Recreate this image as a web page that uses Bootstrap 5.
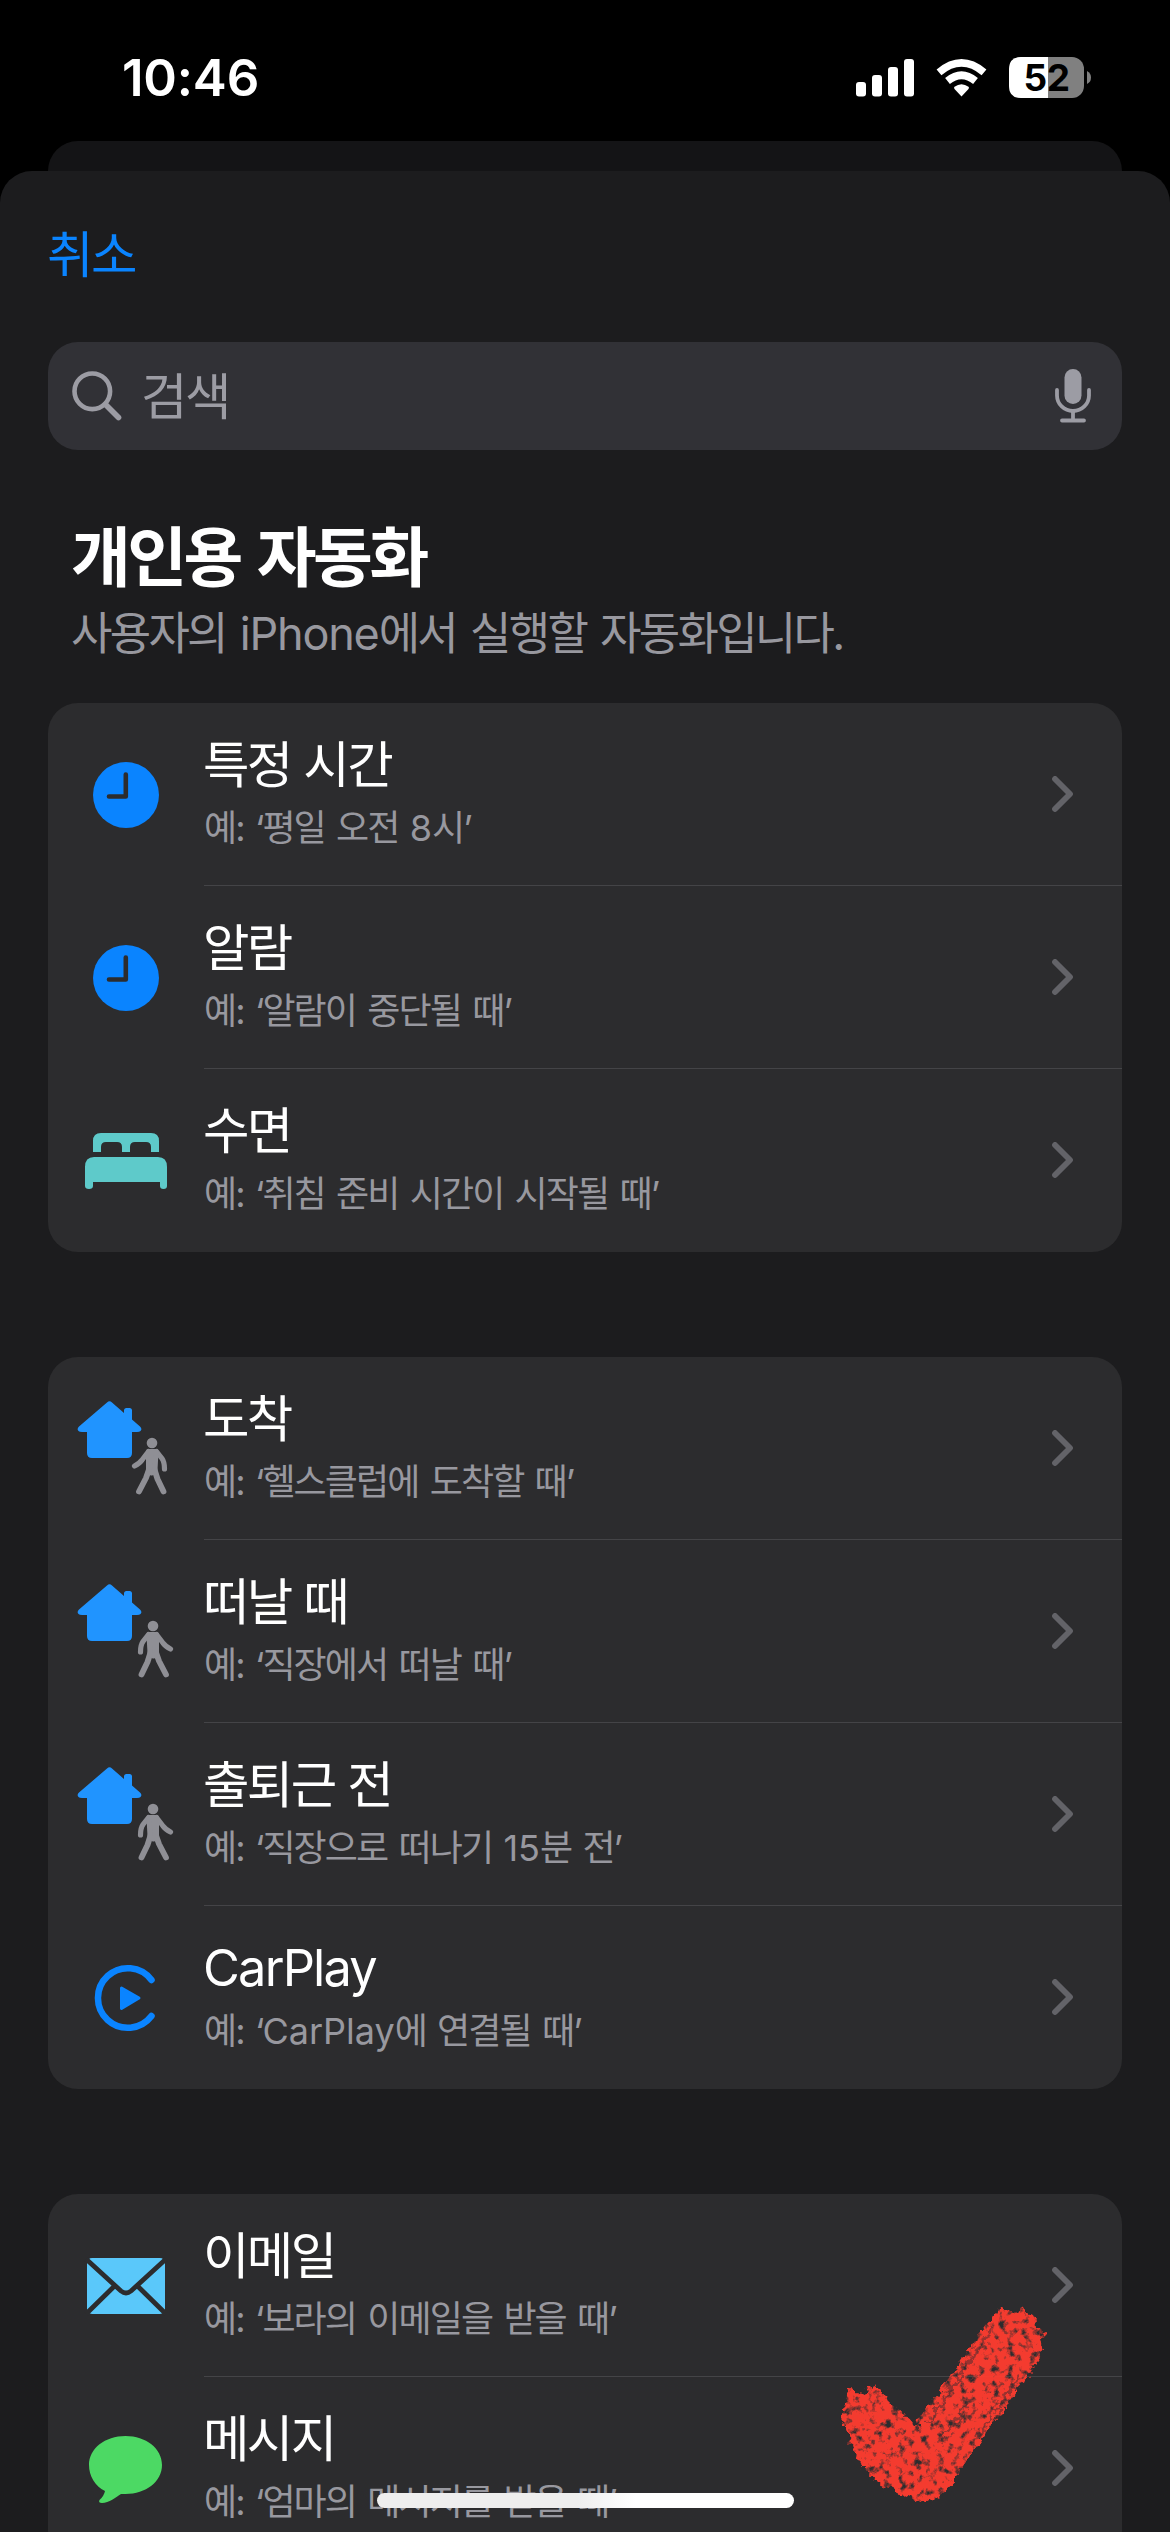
<!DOCTYPE html>
<html lang="ko" data-bs-theme="dark">
<head>
<meta charset="utf-8">
<meta name="viewport" content="width=device-width, initial-scale=1">
<title>개인용 자동화</title>
<link href="https://cdn.jsdelivr.net/npm/bootstrap@5.3.0/dist/css/bootstrap.min.css" rel="stylesheet">
<style>
  html, body { height: 2532px; overflow: hidden; }
  body { background: #000; color: #fff; font-family: Inter, "Noto Sans CJK KR", sans-serif; font-kerning: normal; }
  svg { display: block; flex: none; }
  .screen { width: 1170px; height: 2532px; overflow: hidden; }
  .status { height: 141px; padding: 47px 78px 0 122px; }
  .clock-text { font-size: 51px; font-weight: 600; line-height: 62px; letter-spacing: -.2px; }
  .status svg { margin-top: 3px; }
  .back-sheet { height: 30px; margin: 0 48px; background: #141416; border-radius: 30px 30px 0 0; }
  .sheet { height: 2361px; background: #1c1c1e; border-radius: 32px 32px 0 0; padding: 54px 48px 0; }
  .cancel { font-size: 50.500px; line-height: 60px; letter-spacing: -2.5px; margin-left: -1px; color: #0a84ff; text-decoration: none; }
  .search-box { height: 108px; margin-top: 57px; background: #313136; border-radius: 30px; padding: 0 31px 0 24px; color: #9c9ca4; }
  .search-box .hint { font-size: 50.500px; line-height: 60px; letter-spacing: -2.5px; margin: 2px 0 0 19px; }
  .heading { font-size: 65px; font-weight: 700; line-height: 80px; letter-spacing: -3.500px; word-spacing: 5px; margin: 68px 0 0 23px; }
  .subheading { font-size: 45px; line-height: 56px; letter-spacing: -2.7px; word-spacing: 4px; color: #98989f; margin: 8px 0 0 23px; }
  .subheading span { letter-spacing: -1.2px; }
  .group { background: #2c2c2e; border-radius: 30px; overflow: hidden; margin-bottom: 105px; }
  .group.first { margin-top: 41px; }
  .entry { height: 183px; }
  .entry-body { border-bottom: 1px solid #444447; padding: 32px 49px 0 0; }
  .entry:last-child .entry-body { border-bottom-color: transparent; }
  .entry-title { font-size: 50.500px; line-height: 60px; letter-spacing: -2.6px; word-spacing: 1px; margin-left: -1px; }
  .entry-title.latin { letter-spacing: -1.800px; }
  .entry-note { font-size: 36px; line-height: 46px; letter-spacing: -1.900px; word-spacing: 3px; margin-top: 10px; color: #98989f; }
  .entry-note span { letter-spacing: 0; }
  .chevron { margin-top: 41px; }
  .home-bar { left: 377px; top: 2493px; width: 417px; height: 15px; border-radius: 8px; background: linear-gradient(90deg, #eee 0 48%, #fff 62%); }
  .stroke { left: 830px; top: 2290px; }
</style>
</head>
<body>
<svg width="0" height="0" class="position-absolute">
  <defs>
    <symbol id="clock" viewBox="0 0 156 182"><circle cx="78" cy="92" r="33" fill="#0a84ff"/><path d="M61 93.500H77.800V71.500" fill="none" stroke="#2c2c2e" stroke-width="4.600" stroke-linecap="round" stroke-linejoin="round"/></symbol>
    <symbol id="bed" viewBox="0 0 156 182"><path fill="#5ecaca" d="M45 83V72q0-8 8-8H103q8 0 8 8V83H103V78q0-5-5-5H87q-5 0-5 5v5H74V78q0-5-5-5H58q-5 0-5 5v5ZM37 98q0-10 9-10H110q9 0 9 10V117q0 3-3.500 3t-3.500-3V113H45v4q0 3-4 3t-4-3Z"/></symbol>
    <symbol id="house" viewBox="0 0 156 182"><path fill="#2094ff" d="M59 45.500q2.500-2.300 5 0L76 56V53.500q0-2.500 2.500-2.500h3q2.500 0 2.500 2.500V62.500L92 69.500q2.500 2.500 .5 4.500q-1 1-3.500 1H84V96q0 5-5 5H44q-5 0-5-5V75H34q-2.500 0-3.500-1q-2-2 .5-4.500Z"/></symbol>
    <symbol id="walker" viewBox="0 0 40 60"><g fill="none" stroke="#8f8f95" stroke-linecap="round" stroke-linejoin="round"><circle cx="21" cy="6" r="5.300" fill="#8f8f95" stroke="none"/><path stroke-width="5.200" d="M17.500 14.500 11 23Q9 26 3.500 29M25.500 14.500 31 21.500Q33.500 25 33.500 32"/><path stroke-width="5.800" d="M18.500 31 15 41 8 54.500M23 31 26.500 42 32.500 54.500"/><path stroke-width="5" fill="#8f8f95" d="M17.500 14.500H25L24 33 20.500 36 17.500 33Z"/></g></symbol>
    <symbol id="carplay" viewBox="0 0 156 182"><path d="M103.500 74A29.800 29.800 0 1 0 103.500 110" fill="none" stroke="#0a84ff" stroke-width="6.500" stroke-linecap="round"/><path d="M73.500 82 91 92 73.500 102.500Z" fill="#0a84ff" stroke="#0a84ff" stroke-width="3" stroke-linejoin="round"/></symbol>
    <symbol id="mail" viewBox="0 0 156 182"><rect x="39" y="64" width="78" height="56" rx="5" fill="#5ac8fa"/><path d="M38 65 73 97Q78 101 83 97L118 65M38 120 66.500 92M118 120 89.500 92" fill="none" stroke="#2c2c2e" stroke-width="4.800"/></symbol>
    <symbol id="bubble" viewBox="0 0 156 182"><path fill="#4cd964" d="M77.500 59C98 59 114 71.500 114 88S98 117 77.500 117Q75 117 73 117C68 120 61 126 54 126Q50 126 51.500 123Q56 119 57 114C47 109 41 99 41 88C41 71.500 57 59 77.500 59Z"/></symbol>
    <symbol id="chev" viewBox="0 0 21 36"><path d="M3 3 18 18 3 33" fill="none" stroke="#636368" stroke-width="5.800" stroke-linecap="round" stroke-linejoin="round"/></symbol>
  </defs>
</svg>

<div class="screen position-relative">
  <header class="status d-flex justify-content-between align-items-start">
    <div class="clock-text">10:46</div>
    <svg width="236" height="60" viewBox="856 50 236 60">
      <g fill="#fff"><rect x="856" y="82" width="10" height="14.500" rx="3"/><rect x="872" y="75" width="10" height="21.500" rx="3"/><rect x="888" y="67" width="10" height="29.500" rx="3"/><rect x="904" y="59" width="10" height="37.500" rx="3"/></g>
      <path fill="#fff" d="M961.500 96.500 954.500 89q-1-1.300 0-2.300 7-5 14 0 1 1 0 2.300Z"/>
      <g fill="none" stroke="#fff" stroke-width="7.500"><path d="M947.500 81Q961.500 69.500 975.500 81"/><path d="M939 72.300Q961.500 53.500 984 72.300"/></g>
      <rect x="1009" y="57" width="75" height="41" rx="12" fill="#808080"/>
      <path fill="#fff" d="M1048 57H1021q-12 0-12 12V86q0 12 12 12H1048Z"/>
      <path fill="#808080" d="M1087 71q4 2 4 6.500t-4 6.500Z"/>
      <text x="1046.500" y="91" text-anchor="middle" font-size="37" font-weight="700" letter-spacing="-.5" fill="#000">52</text>
    </svg>
  </header>
  <div class="back-sheet"></div>

  <main class="sheet">
    <a href="#" class="cancel d-block">취소</a>
    <div class="search-box d-flex align-items-center">
      <svg width="50" height="50" viewBox="0 0 50 50" fill="none" stroke="#9c9ca4"><circle cx="20.300" cy="20.300" r="17.800" stroke-width="4.600"/><path d="M33.500 33.500 46.500 46.500" stroke-width="5.600" stroke-linecap="round"/></svg>
      <span class="hint me-auto">검색</span>
      <svg width="36" height="54" viewBox="0 0 36 54"><rect x="9.500" y="0" width="17" height="35" rx="8.500" fill="#9c9ca4"/><path d="M2 21V26.500a16 15.500 0 0 0 32 0V21M18 43V51M7 51.500H29" fill="none" stroke="#9c9ca4" stroke-width="3.800" stroke-linecap="round"/></svg>
    </div>

    <h1 class="heading">개인용 자동화</h1>
    <p class="subheading">사용자의 <span>iPhone</span>에서 실행할 자동화입니다.</p>

    <section class="group first">
      <div class="entry d-flex"><svg width="156" height="182"><use href="#clock"/></svg><div class="entry-body flex-grow-1 d-flex align-items-start"><div class="flex-grow-1"><div class="entry-title">특정 시간</div><div class="entry-note">예: ‘평일 오전 <span>8</span>시’</div></div><svg width="21" height="36" class="chevron"><use href="#chev"/></svg></div></div>
      <div class="entry d-flex"><svg width="156" height="182"><use href="#clock"/></svg><div class="entry-body flex-grow-1 d-flex align-items-start"><div class="flex-grow-1"><div class="entry-title">알람</div><div class="entry-note">예: ‘알람이 중단될 때’</div></div><svg width="21" height="36" class="chevron"><use href="#chev"/></svg></div></div>
      <div class="entry d-flex"><svg width="156" height="182"><use href="#bed"/></svg><div class="entry-body flex-grow-1 d-flex align-items-start"><div class="flex-grow-1"><div class="entry-title">수면</div><div class="entry-note">예: ‘취침 준비 시간이 시작될 때’</div></div><svg width="21" height="36" class="chevron"><use href="#chev"/></svg></div></div>
    </section>

    <section class="group">
      <div class="entry d-flex"><svg width="156" height="182"><use href="#house"/><use href="#walker" x="83" y="80" width="40" height="60"/></svg><div class="entry-body flex-grow-1 d-flex align-items-start"><div class="flex-grow-1"><div class="entry-title">도착</div><div class="entry-note">예: ‘헬스클럽에 도착할 때’</div></div><svg width="21" height="36" class="chevron"><use href="#chev"/></svg></div></div>
      <div class="entry d-flex"><svg width="156" height="182"><use href="#house"/><g transform="translate(126 80) scale(-1 1)"><use href="#walker" width="40" height="60"/></g></svg><div class="entry-body flex-grow-1 d-flex align-items-start"><div class="flex-grow-1"><div class="entry-title">떠날 때</div><div class="entry-note">예: ‘직장에서 떠날 때’</div></div><svg width="21" height="36" class="chevron"><use href="#chev"/></svg></div></div>
      <div class="entry d-flex"><svg width="156" height="182"><use href="#house"/><g transform="translate(126 80) scale(-1 1)"><use href="#walker" width="40" height="60"/></g></svg><div class="entry-body flex-grow-1 d-flex align-items-start"><div class="flex-grow-1"><div class="entry-title">출퇴근 전</div><div class="entry-note">예: ‘직장으로 떠나기 <span>15</span>분 전’</div></div><svg width="21" height="36" class="chevron"><use href="#chev"/></svg></div></div>
      <div class="entry d-flex"><svg width="156" height="182"><use href="#carplay"/></svg><div class="entry-body flex-grow-1 d-flex align-items-start"><div class="flex-grow-1"><div class="entry-title latin">CarPlay</div><div class="entry-note">예: ‘<span>CarPlay</span>에 연결될 때’</div></div><svg width="21" height="36" class="chevron"><use href="#chev"/></svg></div></div>
    </section>

    <section class="group">
      <div class="entry d-flex"><svg width="156" height="182"><use href="#mail"/></svg><div class="entry-body flex-grow-1 d-flex align-items-start"><div class="flex-grow-1"><div class="entry-title">이메일</div><div class="entry-note">예: ‘보라의 이메일을 받을 때’</div></div><svg width="21" height="36" class="chevron"><use href="#chev"/></svg></div></div>
      <div class="entry d-flex"><svg width="156" height="182"><use href="#bubble"/></svg><div class="entry-body flex-grow-1 d-flex align-items-start"><div class="flex-grow-1"><div class="entry-title">메시지</div><div class="entry-note">예: ‘엄마의 메시지를 받을 때’</div></div><svg width="21" height="36" class="chevron"><use href="#chev"/></svg></div></div>
    </section>
  </main>

  <svg class="stroke position-absolute" width="240" height="230" viewBox="0 0 240 230">
    <defs><filter id="crayon" x="-5%" y="-5%" width="110%" height="110%">
      <feTurbulence type="fractalNoise" baseFrequency=".12" numOctaves="3" seed="4" result="n1"/>
      <feDisplacementMap in="SourceGraphic" in2="n1" scale="13" xChannelSelector="R" yChannelSelector="G" result="rough"/>
      <feTurbulence type="fractalNoise" baseFrequency=".13" numOctaves="4" seed="9"/>
      <feColorMatrix values="0 0 0 0 0  0 0 0 0 0  0 0 0 0 0  3.600 0 0 0 -.750" result="grain"/>
      <feComposite in="rough" in2="grain" operator="in"/>
    </filter></defs>
    <g filter="url(#crayon)">
      <path fill="#ff3b30" fill-opacity=".95" d="M18 100 32 102 47 95 60 113 73 123 87 138 90 127 123 83 150 43 170 18 180 24 195 16 202 30 215 42 210 53 213 62 197 87 167 127 140 163 123 193 110 207 93 213 73 205 47 192 30 173 18 147 13 130Z"/>
      <path fill="none" stroke="#2c2c2e" stroke-opacity=".45" stroke-width="2.500" d="M98 134 164 36M110 150 138 112M148 146 190 86"/>
    </g>
  </svg>
  <div class="home-bar position-absolute"></div>
</div>
<script src="https://cdn.jsdelivr.net/npm/bootstrap@5.3.0/dist/js/bootstrap.bundle.min.js"></script>
</body>
</html>
